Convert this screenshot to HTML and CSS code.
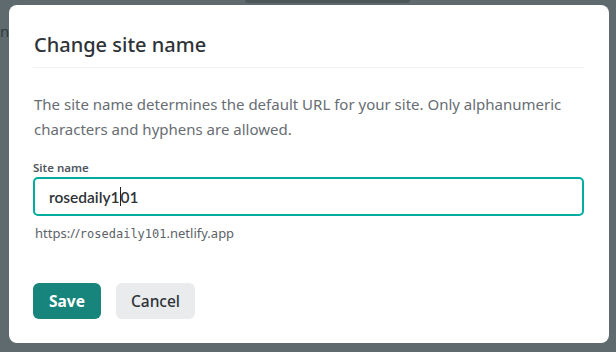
FILE: index.html
```html
<!doctype html>
<html lang="en">
<head>
  <meta charset="utf-8">
  <title>Change site name</title>
  <link rel="stylesheet" href="styles.css">
</head>
<body>
  <div class="backdrop">
    <span class="bgText">n</span>
    <div class="bgBar"></div>
  </div>

  <div class="modal">
    <div class="modalHeader">
      <h2>Change site name</h2>
    </div>
    <div class="modalBody">
      <p class="intro">The site name determines the default URL for your site. Only alphanumeric characters and hyphens are allowed.</p>
      <label class="fieldLabel" for="siteName">Site name</label>
      <div class="inputBox">
        <span class="inputValue">rosedaily1</span><span class="caret"></span><span class="inputValue">01</span>
      </div>
      <div class="hint">https://<code>rosedaily101</code>.netlify.app</div>
    </div>
    <div class="actions">
      <button class="btn primary">Save</button>
      <button class="btn secondary">Cancel</button>
    </div>
  </div>
</body>
</html>
```

FILE: styles.css
```css
:root{
   --overlay:#5f6a6f;
   --teal:#00ad9f; /*focus ring*/
   --teal-dark:#17857b; /*primary button*/
   --text:#2e3338;
   --muted:#676d73;
}
html,body{
  margin:0;
  padding:0;
}
body{
  background-color:var(--overlay);
  font-family:"Noto Sans","Open Sans",sans-serif;
  width:616px;
  height:352px;
  overflow:hidden;
  position:relative;
}
.backdrop{
  position:absolute;
  inset:0;
}
.bgText{
  position:absolute;
  left:0;
  top:21px;
  font-size:15px;
  color:#2f3a3e;
}
.bgBar{
  position:absolute;
  left:245px;
  top:0;
  width:165px;
  height:3px;
  background-color:#4b5659;
  border-radius:0 0 4px 4px;
}
.modal{
  position:relative;
  margin:5px 0 0 9px;
  width:600px;
  height:338px;
  box-sizing:border-box;
  background-color:#fff;
  border-radius:8px;
  padding:0 24px 0 24px;
  display:flex;
  flex-direction:column;
}
.modalHeader{
  padding:27px 0 9px 1px;
  border-bottom:1px solid #f2f3f4;
  margin-right:1px;
}
.modalHeader h2{
  margin:0;
  font-size:20px;
  font-weight:500;
  line-height:26px;
  color:var(--text);
}
.modalBody{
  padding-top:24px;
}
.intro{
  margin:0 0 0 1px;
  font-size:15px;
  line-height:25px;
  color:var(--muted);
}
.fieldLabel{
  display:block;
  margin:18px 0 2px 0;
  font-size:11.5px;
  font-weight:600;
  color:#50575e;
}
.inputBox{
  height:39px;
  box-sizing:border-box;
  border:2px solid var(--teal);
  border-radius:5px;
  margin-right:1px;
  padding:0 14px;
  display:flex;
  align-items:center;
}
.inputValue{
  font-family:Lato,"Noto Sans",sans-serif;
  font-size:15.5px;
  font-weight:600;
  color:var(--text);
}
.caret{
  display:inline-block;
  width:1px;
  height:19px;
  background-color:#222;
}
.hint{
  margin:8px 0 0 2px;
  font-size:13px;
  color:#5c6268;
}
.hint code{
  font-family:"DejaVu Sans Mono","Liberation Mono",monospace;
  font-size:12px;
}
.actions{
  margin-top:auto;
  margin-bottom:24px;
  display:flex;
  gap:15px;
}
.btn{
  height:36px;
  border:0;
  border-radius:6px;
  font-family:inherit;
  font-size:15.5px;
  padding:0 16px;
}
.primary{
  background-color:var(--teal-dark);
  color:#fff;
  font-weight:700;
}
.secondary{
  background-color:#e9ebed;
  color:var(--text);
  font-weight:500;
  padding:0 15px;
}
```
